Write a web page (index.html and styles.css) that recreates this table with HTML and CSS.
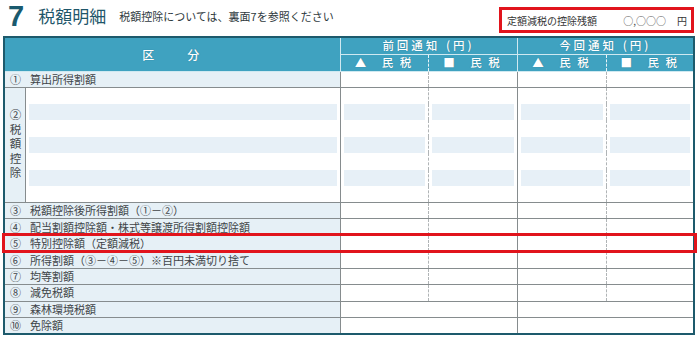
FILE: index.html
```html
<!DOCTYPE html>
<html lang="ja">
<head>
<meta charset="utf-8">
<link rel="stylesheet" href="styles.css">
</head>
<body>
<div class="page">
  <header class="head">
    <span class="num">7</span>
    <h1 class="title">税額明細</h1>
    <p class="sub">税額控除については、裏面7を参照ください</p>
    <div class="remain">
      <span>定額減税の控除残額</span>
      <span class="amt">○,○○○</span>
      <span>円</span>
    </div>
  </header>
  <div class="wrap">
    <table class="tax">
      <colgroup>
        <col class="c0"><col class="c1"><col class="ca"><col class="cb"><col class="cc"><col class="cd">
      </colgroup>
      <thead>
        <tr class="h1">
          <th colspan="2" rowspan="2" class="kubun">区　　分</th>
          <th colspan="2" class="grp">前回通知 (円)</th>
          <th colspan="2" class="grp">今回通知 (円)</th>
        </tr>
        <tr class="h2">
          <th class="a">▲　民 税</th>
          <th class="b">■　民 税</th>
          <th class="a">▲　民 税</th>
          <th class="b">■　民 税</th>
        </tr>
      </thead>
      <tbody>
        <tr><td colspan="2" class="lbl"><span class="n">①</span>算出所得割額</td><td class="a"></td><td class="b"></td><td class="a"></td><td class="b"></td></tr>
        <tr class="sub first"><td rowspan="7" class="vlbl"><span>②税額控除</span></td><td class="blank"></td><td class="a"></td><td class="b"></td><td class="a"></td><td class="b"></td></tr>
        <tr class="sub stripe"><td class="blank"></td><td class="a"></td><td class="b"></td><td class="a"></td><td class="b"></td></tr>
        <tr class="sub"><td class="blank"></td><td class="a"></td><td class="b"></td><td class="a"></td><td class="b"></td></tr>
        <tr class="sub stripe"><td class="blank"></td><td class="a"></td><td class="b"></td><td class="a"></td><td class="b"></td></tr>
        <tr class="sub"><td class="blank"></td><td class="a"></td><td class="b"></td><td class="a"></td><td class="b"></td></tr>
        <tr class="sub stripe"><td class="blank"></td><td class="a"></td><td class="b"></td><td class="a"></td><td class="b"></td></tr>
        <tr class="sub last"><td class="blank"></td><td class="a"></td><td class="b"></td><td class="a"></td><td class="b"></td></tr>
        <tr><td colspan="2" class="lbl"><span class="n">③</span>税額控除後所得割額（①－②）</td><td class="a"></td><td class="b"></td><td class="a"></td><td class="b"></td></tr>
        <tr><td colspan="2" class="lbl"><span class="n">④</span>配当割額控除額・株式等譲渡所得割額控除額</td><td class="a"></td><td class="b"></td><td class="a"></td><td class="b"></td></tr>
        <tr class="hl"><td colspan="2" class="lbl"><span class="n">⑤</span>特別控除額（定額減税）</td><td class="a"></td><td class="b"></td><td class="a"></td><td class="b"></td></tr>
        <tr><td colspan="2" class="lbl"><span class="n">⑥</span>所得割額（③－④－⑤）※百円未満切り捨て</td><td class="a"></td><td class="b"></td><td class="a"></td><td class="b"></td></tr>
        <tr><td colspan="2" class="lbl"><span class="n">⑦</span>均等割額</td><td class="a"></td><td class="b"></td><td class="a"></td><td class="b"></td></tr>
        <tr><td colspan="2" class="lbl"><span class="n">⑧</span>減免税額</td><td class="a"></td><td class="b"></td><td class="a"></td><td class="b"></td></tr>
        <tr><td colspan="2" class="lbl"><span class="n">⑨</span>森林環境税額</td><td colspan="2" class="m"></td><td colspan="2" class="m"></td></tr>
        <tr><td colspan="2" class="lbl"><span class="n">⑩</span>免除額</td><td colspan="2" class="m"></td><td colspan="2" class="m"></td></tr>
      </tbody>
    </table>
    <div class="mark" aria-hidden="true"></div>
  </div>
</div>
</body>
</html>
```

FILE: styles.css
```css
html, body {
  margin: 0;
  padding: 0;
  background: #ffffff;
}
body {
  font-family: "Noto Sans CJK JP", "Noto Sans", sans-serif;
  color: #3a3a3a;
  width: 700px;
  height: 338px;
  overflow: hidden;
}
.page {
  padding: 0 3px;
}
.head {
  display: flex;
  align-items: flex-start;
  height: 36px;
}
.num {
  font-family: "Liberation Sans", Arial, sans-serif;
  font-size: 29px;
  font-weight: 700;
  line-height: 1;
  color: #1a5a6e;
  margin: 2px 0 0 5px;
}
.title {
  font-size: 17px;
  font-weight: 400;
  line-height: 1;
  color: #1e566a;
  margin: 7px 0 0 14px;
}
.sub {
  font-size: 11px;
  line-height: 1;
  color: #2f3a40;
  margin: 11px 0 0 13px;
}
.remain {
  margin: 7px 3px 0 auto;
  width: 195px;
  height: 26px;
  box-sizing: border-box;
  border: 3px solid #e1141c;
  display: flex;
  align-items: center;
  padding: 0 4px 0 5px;
  font-size: 10px;
  color: #333;
  white-space: nowrap;
}
.remain .amt {
  margin-left: auto;
  margin-right: 11px;
  color: #555;
}
.wrap {
  position: relative;
}
.tax {
  width: 692px;
  table-layout: fixed;
  border-collapse: collapse;
  border: 2px solid #1d5a6c;
  font-size: 11px;
}
.c0 { width: 21px; }
.c1 { width: 315px; }
.ca { width: 88px; }
.cb { width: 89px; }
.cc { width: 89px; }
.cd { width: 88px; }
.tax thead tr { height: 17px; }
.tax th {
  background: #3fa2c0;
  color: #ffffff;
  font-weight: 500;
  padding: 0;
  line-height: 15px;
  border: 1px solid #cfe9f1;
  font-size: 11.5px;
  letter-spacing: 2px;
  text-shadow: 0 0 1px rgba(20, 70, 90, 0.5);
}
.tax th.kubun {
  letter-spacing: 3px;
  font-size: 12px;
  border-left: 2px solid #1d5a6c;
  border-top: 2px solid #1d5a6c;
}
.tax th.grp {
  letter-spacing: 3px;
  border-top: 2px solid #1d5a6c;
}
.tax thead th.a { border-right: 1px dashed #e6f4f8; }
.tax thead th.b { border-left: 1px dashed #e6f4f8; }
.tax tbody tr { height: 16.44px; }
.tax td {
  padding: 0;
  border: 1px solid #868c8e;
  background: #ffffff;
}
.tax td.a { border-right: 1px dashed #b0b4b6; }
.tax td.b { border-left: 1px dashed #b0b4b6; }
.tax td.lbl {
  background: #e6f0f6;
  padding-left: 5px;
  white-space: nowrap;
  line-height: 13px;
  color: #404448;
}
.n {
  display: inline-block;
  width: 20px;
}
.tax tr.sub td {
  border-top: none;
  border-bottom: none;
}
.tax tr.sub.first td { border-top: 1px solid #868c8e; }
.tax tr.sub.last td { border-bottom: 1px solid #868c8e; }
.tax tr.sub td.vlbl {
  background: #e6f0f6;
  border: 1px solid #868c8e;
  border-left: 2px solid #1d5a6c;
  text-align: center;
  vertical-align: middle;
}
.vlbl span {
  writing-mode: vertical-rl;
  text-orientation: upright;
  letter-spacing: 3px;
  font-size: 11.5px;
  color: #404448;
  display: inline-block;
  padding-top: 2px;
}
.tax tr.stripe td:not(.vlbl) {
  background: linear-gradient(#e7f0f7, #e7f0f7) center / calc(100% - 6px) 100% no-repeat, #ffffff;
}
.mark {
  position: absolute;
  left: -1px;
  width: 695px;
  top: 197px;
  height: 20px;
  box-sizing: border-box;
  border: 3px solid #e1141c;
  pointer-events: none;
}
```
